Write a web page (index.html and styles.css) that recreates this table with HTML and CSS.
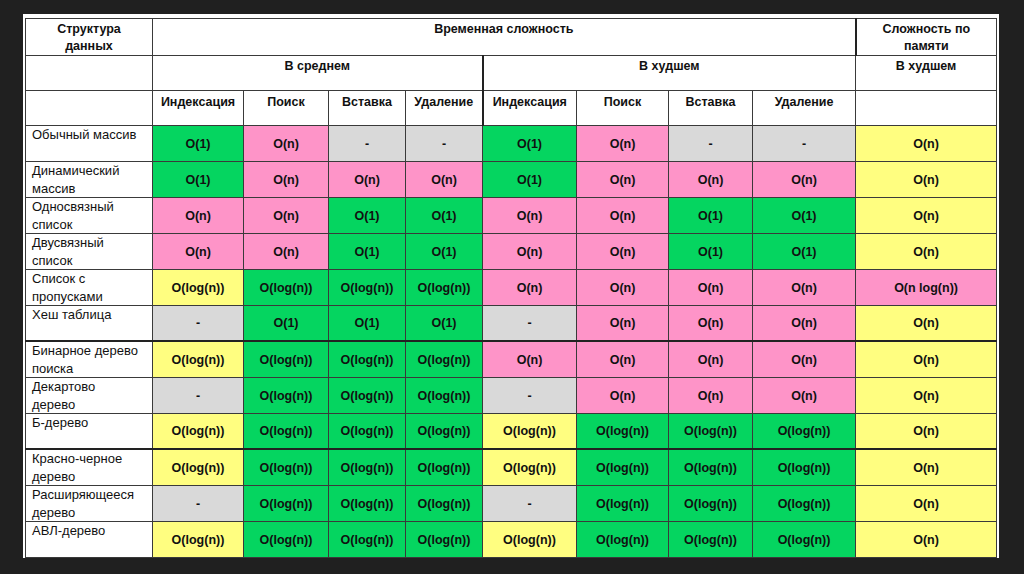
FILE: index.html
```html
<!DOCTYPE html>
<html lang="ru">
<head>
<meta charset="utf-8">
<title>Сложность структур данных</title>
<link rel="stylesheet" href="styles.css">
</head>
<body>
<div class="slide">
<table class="grid">
<colgroup>
<col class="c-name"><col class="c-a1"><col class="c-a2"><col class="c-a3"><col class="c-a4">
<col class="c-w1"><col class="c-w2"><col class="c-w3"><col class="c-w4"><col class="c-mem">
</colgroup>
<thead>
<tr class="h1">
<th>Структура<br>данных</th>
<th colspan="8" class="split">Временная сложность</th>
<th>Сложность по<br>памяти</th>
</tr>
<tr class="h2">
<th></th>
<th colspan="4" class="split">В среднем</th>
<th colspan="4">В худшем</th>
<th>В худшем</th>
</tr>
<tr class="h3">
<th></th>
<th>Индексация</th><th>Поиск</th><th>Вставка</th><th class="split">Удаление</th>
<th>Индексация</th><th>Поиск</th><th>Вставка</th><th>Удаление</th>
<th></th>
</tr>
</thead>
<tbody>
<tr><td class="name">Обычный массив</td>
<td class="g">O(1)</td><td class="p">O(n)</td><td class="x">-</td><td class="x">-</td>
<td class="g">O(1)</td><td class="p">O(n)</td><td class="x">-</td><td class="x">-</td>
<td class="y">O(n)</td></tr>
<tr><td class="name">Динамический массив</td>
<td class="g">O(1)</td><td class="p">O(n)</td><td class="p">O(n)</td><td class="p">O(n)</td>
<td class="g">O(1)</td><td class="p">O(n)</td><td class="p">O(n)</td><td class="p">O(n)</td>
<td class="y">O(n)</td></tr>
<tr><td class="name">Односвязный список</td>
<td class="p">O(n)</td><td class="p">O(n)</td><td class="g">O(1)</td><td class="g">O(1)</td>
<td class="p">O(n)</td><td class="p">O(n)</td><td class="g">O(1)</td><td class="g">O(1)</td>
<td class="y">O(n)</td></tr>
<tr><td class="name">Двусвязный список</td>
<td class="p">O(n)</td><td class="p">O(n)</td><td class="g">O(1)</td><td class="g">O(1)</td>
<td class="p">O(n)</td><td class="p">O(n)</td><td class="g">O(1)</td><td class="g">O(1)</td>
<td class="y">O(n)</td></tr>
<tr><td class="name">Список с пропусками</td>
<td class="y">O(log(n))</td><td class="g">O(log(n))</td><td class="g">O(log(n))</td><td class="g">O(log(n))</td>
<td class="p">O(n)</td><td class="p">O(n)</td><td class="p">O(n)</td><td class="p">O(n)</td>
<td class="p">O(n log(n))</td></tr>
<tr class="thick"><td class="name">Хеш таблица</td>
<td class="x">-</td><td class="g">O(1)</td><td class="g">O(1)</td><td class="g">O(1)</td>
<td class="x">-</td><td class="p">O(n)</td><td class="p">O(n)</td><td class="p">O(n)</td>
<td class="y">O(n)</td></tr>
<tr><td class="name">Бинарное дерево поиска</td>
<td class="y">O(log(n))</td><td class="g">O(log(n))</td><td class="g">O(log(n))</td><td class="g">O(log(n))</td>
<td class="p">O(n)</td><td class="p">O(n)</td><td class="p">O(n)</td><td class="p">O(n)</td>
<td class="y">O(n)</td></tr>
<tr><td class="name">Декартово дерево</td>
<td class="x">-</td><td class="g">O(log(n))</td><td class="g">O(log(n))</td><td class="g">O(log(n))</td>
<td class="x">-</td><td class="p">O(n)</td><td class="p">O(n)</td><td class="p">O(n)</td>
<td class="y">O(n)</td></tr>
<tr class="thick"><td class="name">Б-дерево</td>
<td class="y">O(log(n))</td><td class="g">O(log(n))</td><td class="g">O(log(n))</td><td class="g">O(log(n))</td>
<td class="y">O(log(n))</td><td class="g">O(log(n))</td><td class="g">O(log(n))</td><td class="g">O(log(n))</td>
<td class="y">O(n)</td></tr>
<tr><td class="name">Красно-черное дерево</td>
<td class="y">O(log(n))</td><td class="g">O(log(n))</td><td class="g">O(log(n))</td><td class="g">O(log(n))</td>
<td class="y">O(log(n))</td><td class="g">O(log(n))</td><td class="g">O(log(n))</td><td class="g">O(log(n))</td>
<td class="y">O(n)</td></tr>
<tr><td class="name">Расширяющееся дерево</td>
<td class="x">-</td><td class="g">O(log(n))</td><td class="g">O(log(n))</td><td class="g">O(log(n))</td>
<td class="x">-</td><td class="g">O(log(n))</td><td class="g">O(log(n))</td><td class="g">O(log(n))</td>
<td class="y">O(n)</td></tr>
<tr><td class="name">АВЛ-дерево</td>
<td class="y">O(log(n))</td><td class="g">O(log(n))</td><td class="g">O(log(n))</td><td class="g">O(log(n))</td>
<td class="y">O(log(n))</td><td class="g">O(log(n))</td><td class="g">O(log(n))</td><td class="g">O(log(n))</td>
<td class="y">O(n)</td></tr>
</tbody>
</table>
</div>
</body>
</html>
```

FILE: styles.css
```css
html, body {
  margin: 0;
  padding: 0;
}
body {
  background: #202020;
  width: 1024px;
  height: 574px;
  overflow: hidden;
  font-family: "Liberation Sans", Arial, sans-serif;
  color: #111;
}
.slide {
  margin: 14px 0 0 23px;
  width: 976px;
  height: 544px;
  background: #fff;
  padding: 4px 0 0 2px;
  box-sizing: border-box;
}
.grid {
  border-collapse: collapse;
  table-layout: fixed;
  width: 971px;
}
.c-name { width: 127px; }
.c-a1 { width: 91px; }
.c-a2 { width: 85px; }
.c-a3 { width: 77px; }
.c-a4 { width: 77px; }
.c-w1 { width: 94px; }
.c-w2 { width: 92px; }
.c-w3 { width: 84px; }
.c-w4 { width: 103px; }
.c-mem { width: 141px; }

.grid th, .grid td {
  border: 1px solid #3a3a3a;
  padding: 0;
  overflow: hidden;
}
.grid th {
  font-weight: bold;
  font-size: 12.5px;
  line-height: 17px;
  vertical-align: top;
  text-align: center;
  padding-top: 2px;
}
.h1 th { height: 34px; }
.h2 th { height: 32px; }
.h3 th { padding-top: 3px; height: 31px; }
.grid th.split { border-right: 2px solid #222; }

.grid td {
  height: 35px;
  font-size: 12.5px;
  font-weight: bold;
  text-align: center;
  vertical-align: middle;
}
.grid td.name {
  font-weight: normal;
  font-size: 13px;
  line-height: 17.5px;
  text-align: left;
  vertical-align: top;
  padding: 0 10px 0 6px;
}
.grid tr.thick td { border-bottom: 2px solid #222; height: 34px; }

.g { background: #05d560; }
.p { background: #fe94c8; }
.y { background: #fffe80; }
.x { background: #d9d9d9; }
```
